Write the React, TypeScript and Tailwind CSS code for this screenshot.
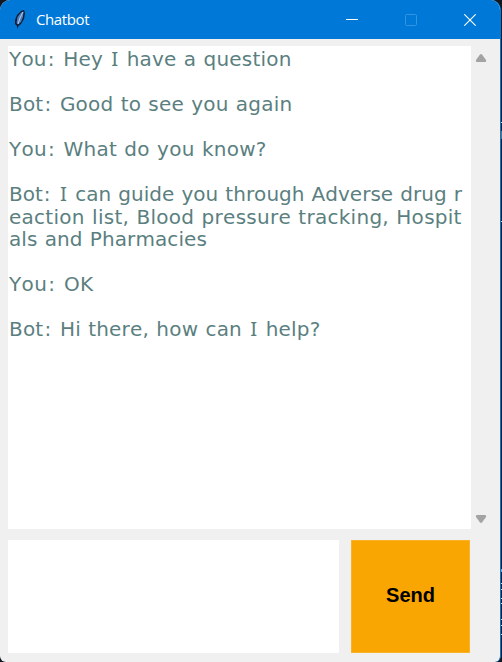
import React from "react";

type Line = { text: string; spacing?: string };

const lines: Line[] = [
  { text: "You: Hey I have a question" },
  { text: "" },
  { text: "Bot: Good to see you again" },
  { text: "" },
  { text: "You: What do you know?", spacing: "tracking-[0.25px]" },
  { text: "" },
  { text: "Bot: I can guide you through Adverse drug r", spacing: "tracking-[0.02px]" },
  { text: "eaction list, Blood pressure tracking, Hospit", spacing: "tracking-[0.27px]" },
  { text: "als and Pharmacies", spacing: "tracking-[0.1px]" },
  { text: "" },
  { text: "You: OK", spacing: "tracking-[0.35px]" },
  { text: "" },
  { text: "Bot: Hi there, how can I help?" },
];

function Message({ line }: { line: Line }) {
  return (
    <div className={`h-[22.5px] whitespace-pre ${line.spacing ?? "tracking-[0.2px]"}`}>
      {line.text.split(/(\bI\b|:)/).map((part, i) => {
        if (part === "I")
          return <span key={i} className="inline-block h-[20px] w-[9.2px] text-center align-top font-['Noto_Sans',sans-serif] text-[20.5px] leading-[20.5px]">I</span>;
        if (part === ":") return <span key={i} className="pl-[1px] pr-[1.3px]">:</span>;
        return part;
      })}
    </div>
  );
}

function Feather() {
  return (
    <svg width="12" height="20" viewBox="0 0 12 20">
      <path d="M3.5 19 L3 16 L1 14 L1 10 L3 5 L7 1 L10 0 L11 3 L10 9 L7 14 L4.5 16 Z" fill="#101c30" />
      <path d="M2.5 13 L3.5 7 L7 2.5 L9.5 1.5 L9 7 L7 12 L4 14.5 Z" fill="#4a7fc4" />
      <path d="M4 14 L6 8 L9 2" stroke="#b5cfe9" strokeWidth="1" fill="none" />
    </svg>
  );
}

function TitleBar() {
  return (
    <header className="flex h-[39px] shrink-0 items-center bg-[#0078d7] pl-[14px] pr-[24px] text-white">
      <Feather />
      <h1 className="ml-[10px] pb-[2px] font-['Open_Sans',sans-serif] text-[15px] leading-[20px] tracking-[-0.4px]">Chatbot</h1>
      <div className="ml-auto flex items-center gap-[47px]">
        <svg width="12" height="12" viewBox="0 0 12 12"><path d="M0 5.5H12" stroke="#fff" /></svg>
        <svg width="12" height="12" viewBox="0 0 12 12"><rect x="0.5" y="0.5" width="11" height="11" rx="1" fill="none" stroke="#3394e0" /></svg>
        <svg width="12" height="12" viewBox="0 0 12 12"><path d="M0.3 0.3L11.7 11.7M11.7 0.3L0.3 11.7" stroke="#fff" strokeWidth="1.1" /></svg>
      </div>
    </header>
  );
}

export default function App() {
  return (
    <div className="flex h-[662px] w-[502px] overflow-hidden bg-[#111820]">
      <main className="flex h-full w-[501px] flex-col overflow-hidden rounded-bl-[6px] rounded-br-[6px] rounded-tl-[10px] rounded-tr-[10px] border-r border-[#0078d7] bg-[#f0f0f0]">
        <TitleBar />
        <div className="flex pl-[8px] pt-[7px]">
          <section className="h-[483px] w-[463px] bg-white pl-[1px] pt-[2px] font-['DejaVu_Sans',sans-serif] text-[20px] leading-[22.5px] text-[#5b7f7f] [font-kerning:none] [word-spacing:0.7px]">
            {lines.map((line, i) => <Message key={i} line={line} />)}
          </section>
          <div className="flex w-[20px] flex-col items-center justify-between pb-[6px] pt-[8px]">
            <svg width="12" height="8" viewBox="0 0 12 8"><path d="M5 0.5Q6 -0.3 7 0.5L11 6Q11.5 8 10 8H2Q0.5 8 1 6Z" fill="#a3a3a3" /></svg>
            <svg width="12" height="8" viewBox="0 0 12 8"><path d="M5 7.5Q6 8.3 7 7.5L11 2Q11.5 0 10 0H2Q0.5 0 1 2Z" fill="#a3a3a3" /></svg>
          </div>
        </div>
        <div className="mt-[11px] flex gap-[12px] pl-[8px]">
          <textarea aria-label="Message" className="block h-[113px] w-[331px] resize-none bg-white outline-none" />
          <button className="h-[113px] w-[119px] border border-[#fbb12a] bg-[#f9a602] pb-[3px] font-['Liberation_Sans',sans-serif] text-[20px] font-bold text-black">Send</button>
        </div>
      </main>
      <div className="flex w-px flex-col">
        <div className="mt-[122px] h-px bg-slate-300" />
        <div className="mt-[8px] h-[8px] bg-[#7b675f]" />
        <div className="mt-[82px] h-px bg-slate-300" />
        <div className="mt-[347px] h-[3px] bg-slate-400" />
        <div className="mt-[11px] h-px bg-slate-300" />
        <div className="mt-[5px] h-px bg-slate-300" />
        <div className="mt-[8px] h-px bg-slate-300" />
        <div className="mt-[4px] h-px bg-slate-300" />
        <div className="mt-[15px] h-px bg-slate-300" />
        <div className="mt-[5px] h-px bg-slate-300" />
        <div className="mt-[8px] h-px bg-slate-300" />
      </div>
    </div>
  );
}
